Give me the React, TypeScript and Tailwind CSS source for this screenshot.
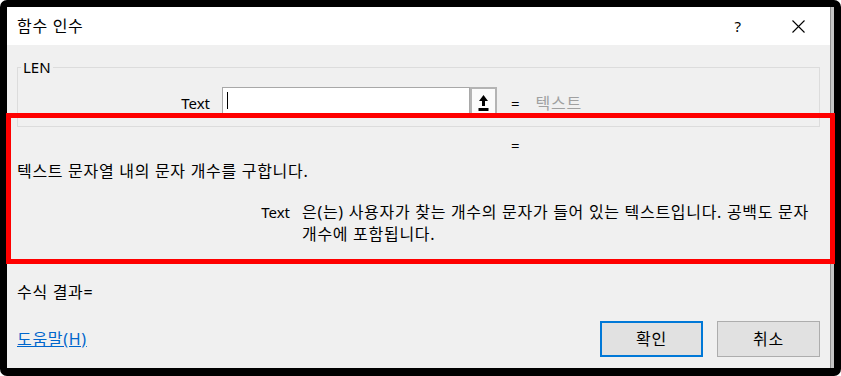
export default function App() {
  return (
    <div className="relative w-[841px] h-[376px] bg-white text-[16px] tracking-[0.7px] text-black font-['Noto_Sans','Noto_Sans_CJK_KR',sans-serif]">
      <div className="flex h-full border-l-[7px] border-t-[7px] border-r-[7px] border-b-[8px] border-black rounded-[7px]">
        <div className="flex flex-1 flex-col">
          {/* title bar */}
          <div className="flex h-[38px] items-center bg-white pl-[10px] pr-[25px]">
            <span className="leading-[20px]">함수 인수</span>
            <span className="ml-auto text-[15px] tracking-normal leading-[20px]">?</span>
            <svg className="ml-[51px]" width="13" height="13" viewBox="0 0 13 13">
              <path d="M0.5 0.5 L12.5 12.5 M12.5 0.5 L0.5 12.5" stroke="#000" strokeWidth="1.1" />
            </svg>
          </div>
          {/* body */}
          <div className="flex flex-1 flex-col bg-[#f0f0f0] px-[10px] pb-[11px]">
            <fieldset className="mt-[12px] border border-[#dcdcdc] pb-[8px]">
              <legend className="ml-[3px] px-[2px] text-[15px] tracking-normal leading-[20px]">LEN</legend>
              <div className="mt-[10px] flex h-[31px] items-center">
                <span className="w-[192px] text-right text-[15px] tracking-normal leading-[20px]">Text</span>
                <div className="relative ml-[12px] h-[31px] w-[248px] border border-[#a8a8a8] bg-white">
                  <div className="absolute left-[4px] top-[4px] h-[17px] w-[1px] bg-black" />
                </div>
                <div className="flex h-[31px] w-[27px] items-center justify-center border-2 border-[#b4b4b4] bg-[#fbfbfb]">
                  <svg width="11" height="18" viewBox="0 0 11 18">
                    <path d="M5.5 1 L10 7 L7 7 L7 12 L4 12 L4 7 L1 7 Z" fill="#000" />
                    <rect x="0.5" y="14" width="10" height="3" fill="#000" />
                  </svg>
                </div>
                <span className="ml-[14px] text-[15px] tracking-normal leading-[20px]">=</span>
                <span className="ml-[16px] leading-[20px] text-[#a0a0a0]">텍스트</span>
              </div>
            </fieldset>
            <div className="mt-[8px] pl-[494px] text-[15px] tracking-normal leading-[20px]">=</div>
            <div className="mt-[6px] leading-[20px]">텍스트 문자열 내의 문자 개수를 구합니다.</div>
            <div className="mt-[20px] flex">
              <span className="w-[273px] text-right text-[15px] tracking-normal leading-[22px]">Text</span>
              <div className="ml-[12px] leading-[22px]">
                <div>은(는) 사용자가 찾는 개수의 문자가 들어 있는 텍스트입니다. 공백도 문자</div>
                <div>개수에 포함됩니다.</div>
              </div>
            </div>
            <div className="mt-[37px] leading-[20px]">수식 결과=</div>
            <div className="mt-auto flex items-center">
              <span className="leading-[20px] text-[#0066cc] underline">도움말(H)</span>
              <button className="ml-auto h-[36px] w-[103px] border-2 border-[#0078d7] bg-[#e1e1e1] leading-[20px]">확인</button>
              <button className="ml-[14px] h-[36px] w-[103px] border border-[#adadad] bg-[#e1e1e1] leading-[20px]">취소</button>
            </div>
          </div>
        </div>
        <div className="w-[4px] border-l border-[#8f8f8f] bg-[#c4c4c4]" />
      </div>
      {/* red annotation box */}
      <div className="absolute left-[6px] top-[113px] h-[151px] w-[829px] border-[5px] border-[#ff0000]" />
    </div>
  );
}
